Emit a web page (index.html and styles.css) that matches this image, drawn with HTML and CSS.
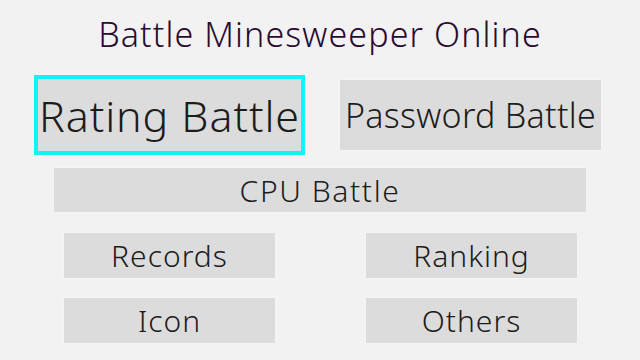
FILE: index.html
```html
<!DOCTYPE html>
<html lang="en">
<head>
    <meta charset="UTF-8">
    <meta name="viewport" content="width=device-width, initial-scale=1.0">
    <title>Battle Minesweeper Online</title>
    <link rel="stylesheet" href="styles.css">
</head>
<body>
    <div class="menu">
        <h1 class="title">Battle Minesweeper Online</h1>

        <div class="row row-top">
            <button class="menu-btn rating-btn selected">Rating Battle</button>
            <button class="menu-btn password-btn">Password Battle</button>
        </div>

        <div class="row row-cpu">
            <button class="menu-btn cpu-btn">CPU Battle</button>
        </div>

        <div class="row row-small">
            <button class="menu-btn small-btn">Records</button>
            <button class="menu-btn small-btn">Ranking</button>
        </div>

        <div class="row row-small last">
            <button class="menu-btn small-btn">Icon</button>
            <button class="menu-btn small-btn">Others</button>
        </div>
    </div>
</body>
</html>
```

FILE: styles.css
```css
body {
    margin: 0;
    background-color: #f2f2f2;
    font-family: 'Noto Sans', 'Noto Sans CJK JP', sans-serif;
    width: 640px;
    height: 360px;
    overflow: hidden;
}
.menu {
    display: flex;
    flex-direction: column;
}
.title {
    margin: 14px 0 0 0;
    text-align: center;
    font-size: 34px;
    font-weight: 350;
    letter-spacing: 1.1px;
    line-height: 40px;
    color: #2a0b30;
}
.row {
    display: flex;
    align-items: center;
}
.menu-btn {
    font-family: inherit;
    background-color: #dcdcdc;
    color: #1c1c1c;
    border: none;
    padding: 0;
    margin: 0;
    font-weight: 350;
    box-shadow: 0 0 4px rgba(255, 255, 255, 0.6);
}
.row-top {
    margin-top: 21px;
    padding-left: 34px;
    gap: 35px;
}
.rating-btn {
    width: 271px;
    height: 80px;
    font-size: 43px;
    letter-spacing: 0.9px;
}
.rating-btn.selected {
    border: 4px solid #0ff5f5;
}
.password-btn {
    width: 261px;
    height: 70px;
    font-size: 34px;
    letter-spacing: 0.3px;
}
.row-cpu {
    margin-top: 13px;
    padding-left: 54px;
}
.cpu-btn {
    width: 532px;
    height: 44px;
    font-size: 30px;
    letter-spacing: 1.6px;
}
.row-small {
    margin-top: 21px;
    padding-left: 64px;
    gap: 91px;
}
.row-small.last {
    margin-top: 20px;
}
.small-btn {
    width: 211px;
    height: 45px;
    font-size: 30px;
    letter-spacing: 1px;
}
```
